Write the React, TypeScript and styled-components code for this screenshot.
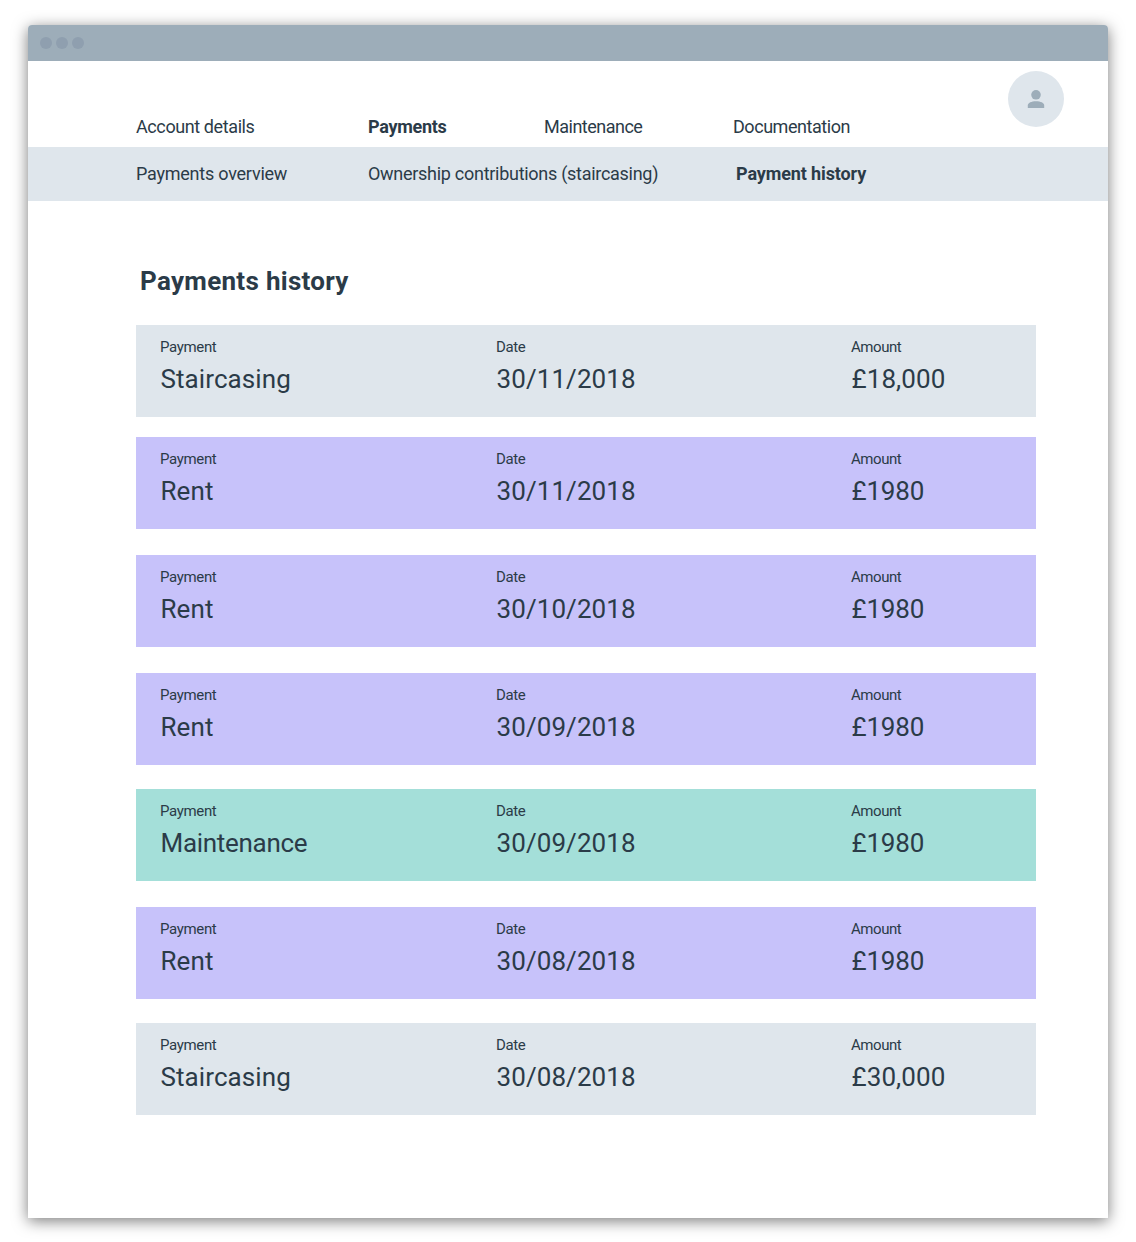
import React from "react";
import styled, { createGlobalStyle } from "styled-components";

const GlobalStyle = createGlobalStyle`
  * { box-sizing: border-box; }
  body {
    margin: 0;
    background: #fff;
    color: #2b3b48;
    font-family: Roboto, "Liberation Sans", sans-serif;
  }
`;

const Page = styled.div`
  padding: 25px 28px 24px 28px;
`;

const Window = styled.div`
  height: 1193px;
  border-radius: 4px 4px 0 0;
  background: #fff;
  box-shadow: 0 3px 15px rgba(0, 0, 0, 0.52);
`;

const TitleBar = styled.div`
  display: flex;
  align-items: center;
  gap: 4px;
  height: 36px;
  padding-left: 12.3px;
  border-radius: 4px 4px 0 0;
  background: #9dadb9;
`;

const Dot = styled.span`
  width: 12px;
  height: 12px;
  border-radius: 50%;
  background: #8f9faf;
`;

const Header = styled.header`
  display: flex;
  justify-content: space-between;
  height: 86px;
  padding: 10px 43.8px 0 108px;
`;

const NavRow = styled.nav<{ $columns: string; $top: number }>`
  display: grid;
  grid-template-columns: ${(p) => p.$columns};
  padding-top: ${(p) => p.$top}px;
`;

const SubNav = styled.div`
  height: 54px;
  padding-left: 108px;
  background: #dfe6ec;
`;

const NavLink = styled.a<{ $active?: boolean; $spacing: number }>`
  font-size: 18px;
  line-height: 22px;
  font-weight: ${(p) => (p.$active ? 700 : 400)};
  letter-spacing: ${(p) => p.$spacing}px;
  white-space: nowrap;
`;

const Avatar = styled.div`
  display: flex;
  align-items: center;
  justify-content: center;
  width: 56px;
  height: 56px;
  border-radius: 50%;
  background: #dfe6ec;
`;

const Content = styled.main`
  width: 1008px;
  padding: 64px 0 0 108px;
`;

const Heading = styled.h1`
  margin: 0 0 28px 4px;
  font-size: 26px;
  line-height: 32px;
  font-weight: 700;
  letter-spacing: 0.3px;
`;

const tones = { grey: "#dfe6ec", violet: "#c7c2fa", mint: "#a4dfd9" };
type Tone = keyof typeof tones;

const Card = styled.section<{ $tone: Tone; $gap: number }>`
  display: grid;
  grid-template-columns: 336px 355px 1fr;
  height: 92px;
  margin-bottom: ${(p) => p.$gap}px;
  padding: 12px 0 0 24px;
  background: ${(p) => tones[p.$tone]};
`;

const Label = styled.div<{ $spacing: number }>`
  font-size: 15px;
  line-height: 20px;
  letter-spacing: ${(p) => p.$spacing}px;
`;

const Value = styled.div<{ $spacing: number }>`
  margin-top: 6px;
  padding-left: 0.5px;
  font-size: 26px;
  line-height: 32px;
  letter-spacing: ${(p) => p.$spacing}px;
`;

interface Payment {
  type: string;
  date: string;
  amount: string;
  tone: Tone;
  gap: number;
}

const payments: Payment[] = [
  { type: "Staircasing", date: "30/11/2018", amount: "£18,000", tone: "grey", gap: 20 },
  { type: "Rent", date: "30/11/2018", amount: "£1980", tone: "violet", gap: 26 },
  { type: "Rent", date: "30/10/2018", amount: "£1980", tone: "violet", gap: 26 },
  { type: "Rent", date: "30/09/2018", amount: "£1980", tone: "violet", gap: 24 },
  { type: "Maintenance", date: "30/09/2018", amount: "£1980", tone: "mint", gap: 26 },
  { type: "Rent", date: "30/08/2018", amount: "£1980", tone: "violet", gap: 24 },
  { type: "Staircasing", date: "30/08/2018", amount: "£30,000", tone: "grey", gap: 0 },
];

const typeSpacing: Record<string, number> = { Staircasing: 0.08, Rent: 0.1, Maintenance: -0.3 };

export default function App() {
  return (
    <Page>
      <GlobalStyle />
      <Window>
        <TitleBar>
          <Dot />
          <Dot />
          <Dot />
        </TitleBar>
        <Header>
          <NavRow $columns="232px 176px 189px auto" $top={45}>
            <NavLink $spacing={-0.4}>Account details</NavLink>
            <NavLink $active $spacing={-0.3}>Payments</NavLink>
            <NavLink $spacing={-0.5}>Maintenance</NavLink>
            <NavLink $spacing={-0.45}>Documentation</NavLink>
          </NavRow>
          <Avatar>
            <svg width="18" height="20" viewBox="0 0 18 20" fill="#9dadb9">
              <circle cx="9" cy="5.8" r="4.8" />
              <path d="M.8 19v-2.6c0-2.5 3.6-4.1 8.2-4.1s8.2 1.6 8.2 4.1V19z" />
            </svg>
          </Avatar>
        </Header>
        <SubNav>
          <NavRow $columns="232px 368px auto" $top={16}>
            <NavLink $spacing={-0.23}>Payments overview</NavLink>
            <NavLink $spacing={-0.28}>Ownership contributions (staircasing)</NavLink>
            <NavLink $active $spacing={-0.12}>Payment history</NavLink>
          </NavRow>
        </SubNav>
        <Content>
          <Heading>Payments history</Heading>
          {payments.map((p, i) => (
            <Card key={i} $tone={p.tone} $gap={p.gap}>
              <div>
                <Label $spacing={-0.35}>Payment</Label>
                <Value $spacing={typeSpacing[p.type]}>{p.type}</Value>
              </div>
              <div>
                <Label $spacing={-0.4}>Date</Label>
                <Value $spacing={0.08}>{p.date}</Value>
              </div>
              <div>
                <Label $spacing={-0.45}>Amount</Label>
                <Value $spacing={p.amount.includes(",") ? 0.08 : -0.2}>{p.amount}</Value>
              </div>
            </Card>
          ))}
        </Content>
      </Window>
    </Page>
  );
}
